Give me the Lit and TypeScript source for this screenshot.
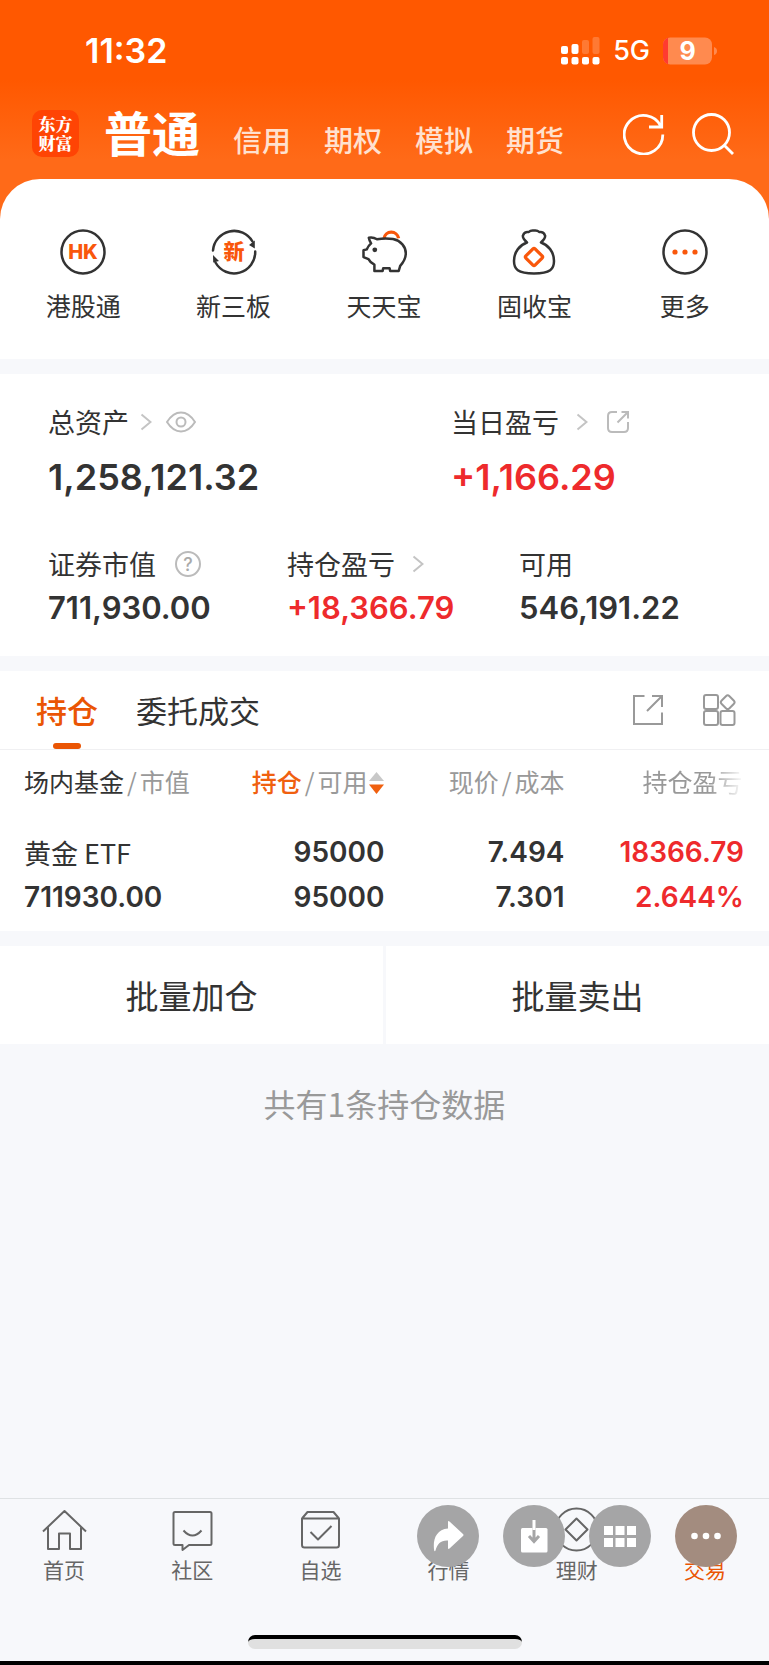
import { LitElement, html, svg, css } from "lit";
import { customElement } from "lit/decorators.js";
import { classMap } from "lit/directives/class-map.js";

const chevron = html`<svg class="chevron" width="12" height="18" viewBox="0 0 12 18" aria-hidden="true"><path d="M1.5 1.5 10.5 9l-9 7.5" /></svg>`;

const shortcuts = [
  {
    label: "港股通",
    icon: svg`<circle cx="24" cy="24" r="21.5"/><text class="hk" x="24" y="31" text-anchor="middle">HK</text>`,
  },
  {
    label: "新三板",
    icon: svg`<path d="M3 22.500A21.200 21.200 0 0 1 42.500 13.500"/><path d="M45.200 23.500A21.200 21.200 0 0 1 5.500 34.500"/><path class="dark" d="M39 17 44.800 12.500 44.800 20.500zM3 27 9 33 3.200 34.500z"/><text class="xin" x="24" y="31" text-anchor="middle">新</text>`,
  },
  {
    label: "天天宝",
    icon: svg`<path class="orange" d="M24 10.500a7.400 7.400 0 0 1 14.600-.2"/><path d="M8.800 9.800c2.800-.6 5.700 0 8.200 1.500 5-1 11-1.200 16-.2 8 1.700 12.800 7.500 12.800 14.200 0 6-3.300 10-5.600 12.500l-1.500 5.200h-8.500l-.6-2.800h-6.400l-.6 2.800h-8.200v-6.300c-2.600-1.200-4.600-3-5.900-5.600l-5-2v-6.800l3.200-.9c1.100-2.600 2.400-4.300 4.400-6-1-1.500-1.900-3.500-2.300-5.600z"/><circle class="dark" cx="14.800" cy="21.800" r="2.400"/>`,
  },
  {
    label: "固收宝",
    icon: svg`<path d="M17 14.500c-2.500-2.300-4.800-4.600-4-7 .7-2.500 3-4 5.500-3.400C20 2.800 22 2.200 24 2.600c2-.4 4 .2 5.500 1.500 2.500-.6 4.800.9 5.500 3.400.8 2.400-1.500 4.700-4 7C38 17 44 23.500 44 33c0 8-3.500 12.500-20 12.500S4 41 4 33c0-9.500 6-16 13-18.500"/><rect class="orange" x="17.500" y="22.500" width="13" height="13" rx="1.500" transform="rotate(45 24 29)"/>`,
  },
  {
    label: "更多",
    icon: svg`<circle cx="24" cy="24" r="21.500"/><circle class="dot" cx="14" cy="24" r="2.600"/><circle class="dot" cx="24" cy="24" r="2.600"/><circle class="dot" cx="34" cy="24" r="2.600"/>`,
  },
];

const navItems = [
  { label: "首页", icon: svg`<path d="M1 22.500 22.500 2 44 22.500M6 18.500V40h11V24.500h11V40h11V18.500"/>` },
  { label: "社区", icon: svg`<path d="M5 3h35q1.500 0 1.500 1.500v30q0 1.500-1.500 1.500H19l-6.500 5V36H5q-1.500 0-1.500-1.500v-30Q3.500 3 5 3zM13.500 21.500q9 10 18 0"/>` },
  { label: "自选", icon: svg`<path d="M4 9.500h37V36q0 2.500-2.500 2.500h-32Q4 38.500 4 36zM4 9.500 9.500 3h26L41 9.500M12.500 23l7.500 7.500L33.500 17"/>` },
  { label: "行情", icon: svg`<path d="M4 36V18h9v18M18 36V6h9v30M32 36V12h9v24"/>` },
  { label: "理财", icon: svg`<circle cx="22.500" cy="20.500" r="21"/><path d="M22.500 9.500 33.500 20.500l-11 11-11-11z"/>` },
  { label: "交易", active: true, icon: svg`<circle cx="22.500" cy="21" r="19"/><path d="M14 17h17M14 25h17"/>` },
];

const tools = [
  { name: "分享", icon: svg`<path d="M31 17q0-1.500 1.500-.5L46 29q1 1 0 2L32.500 43.500q-1.500 1-1.500-.5v-7.500c-7-.5-10.500 3-12.500 10q-.8 1.500-1.300 0C15.500 35 19 24.500 31 23.500z"/>` },
  { name: "保存", icon: svg`<rect x="18" y="23" width="26.500" height="24.500" rx="1.500"/><path class="cut" d="M31 23v12.500M26 31l5 5.500 5-5.500"/><path class="stem" d="M31 15v10"/>` },
  { name: "宫格", icon: svg`<path d="M15 21h9v9h-9zM26.500 21h9v9h-9zM38 21h9v9h-9zM15 33h9v9h-9zM26.500 33h9v9h-9zM38 33h9v9h-9z"/>` },
  { name: "更多操作", warm: true, icon: svg`<circle cx="19.500" cy="31" r="3.300"/><circle cx="31" cy="31" r="3.300"/><circle cx="42.500" cy="31" r="3.300"/>` },
];

@customElement("status-bar")
class StatusBar extends LitElement {
  static styles = css`
    :host { display: flex; align-items: center; justify-content: space-between; padding: 27px 52px 0 85px; height: 48px; color: #fff; font-family: Inter, sans-serif; }
    .time { font-size: 34px; font-weight: 600; line-height: 48px; }
    .right { display: flex; align-items: center; gap: 13px; }
    .net { font-size: 27px; line-height: 48px; font-weight: 500; }
    svg { display: block; fill: #fff; }
    .faint { fill-opacity: 0.2; }
    .level { font: 700 25px Inter, sans-serif; }
  `;
  render() {
    return html`
      <span class="time">11:32</span>
      <span class="right">
        <svg width="39" height="28" viewBox="0 0 39 28" role="img" aria-label="信号">
          <rect x="0" y="9" width="7" height="8" rx="2"/><rect x="10.500" y="7" width="7" height="10" rx="2"/>
          <rect class="faint" x="21" y="3" width="7" height="14" rx="2"/><rect class="faint" x="31.500" y="0" width="7" height="17" rx="2"/>
          <rect x="0" y="20" width="7" height="7.500" rx="2"/><rect x="10.500" y="20" width="7" height="7.500" rx="2"/><rect x="21" y="20" width="7" height="7.500" rx="2"/><rect x="31.500" y="20" width="7" height="7.500" rx="2"/>
        </svg>
        <span class="net">5G</span>
        <svg width="54" height="28" viewBox="0 0 54 28" role="img" aria-label="电量 9">
          <rect x="0" y="0.500" width="49" height="27" rx="7" fill="#ff8a4f"/>
          <path d="M7 .5H5V27.500H7A7 7 0 0 1 0 20.500V7.500A7 7 0 0 1 7 .5z" fill="#ff3b30"/>
          <path d="M51 10v8q3-1 3-4t-3-4z" fill="#ff8a4f"/>
          <text class="level" x="24.500" y="23" text-anchor="middle">9</text>
        </svg>
      </span>`;
  }
}

@customElement("app-header")
class AppHeader extends LitElement {
  static styles = css`
    :host { display: flex; align-items: center; padding: 26px 35px 12px 32px; height: 66px; }
    .logo { width: 47px; box-sizing: border-box; height: 47px; padding-top: 4px; border-radius: 10px; background: #ff4404; color: #fff; text-align: center; font: 900 17px/19px "Noto Serif CJK SC", "Noto Sans CJK SC", sans-serif; margin-bottom: 2px; }
    nav { display: flex; align-items: flex-end; gap: 33px; margin: 0 auto 0 25px; padding-bottom: 6px; font-size: 29px; font-weight: 500; }
    a { color: #ffe1cf; text-decoration: none; line-height: 40px; white-space: nowrap; }
    .current { color: #fff; font-size: 48px; line-height: 56px; font-weight: 700; }
    .actions { display: flex; gap: 27px; }
    button { border: 0; padding: 0; background: none; display: block; }
    svg { display: block; fill: none; stroke: #fff; stroke-width: 2.8; }
  `;
  render() {
    return html`
      <div class="logo">东方<br />财富</div>
      <nav>
        <a class="current" href="#normal">普通</a><a href="#credit">信用</a><a href="#option">期权</a><a href="#sim">模拟</a><a href="#future">期货</a>
      </nav>
      <div class="actions">
        <button aria-label="刷新"><svg width="42" height="42" viewBox="0 0 42 42"><path d="M39.800 21.500A19.300 19.300 0 1 1 38 13.500M38.700 2V14H26"/></svg></button>
        <button aria-label="搜索"><svg width="42" height="42" viewBox="0 0 42 42"><circle cx="19.500" cy="19.500" r="18"/><path d="M32 32l9 9"/></svg></button>
      </div>`;
  }
}

@customElement("shortcut-row")
class ShortcutRow extends LitElement {
  static styles = css`
    :host { display: grid; grid-template-columns: repeat(5, 1fr); padding: 49px 9px 34px 8px; height: 97px; background: #fff; border-radius: 40px 40px 0 0; }
    a { display: flex; flex-direction: column; align-items: center; gap: 10px; color: #333; text-decoration: none; font-size: 25px; line-height: 38px; }
    svg { fill: none; stroke: #333; stroke-width: 2.5; stroke-linejoin: round; stroke-linecap: round; }
    .orange { stroke: #f9570b; stroke-width: 3.2; stroke-linecap: butt; }
    .dark { fill: #333; stroke: none; }
    .dot { fill: #f9570b; stroke: none; }
    text { fill: #f9570b; stroke: none; }
    .hk { font: 800 20px Inter, sans-serif; }
    .xin { font: 900 21px "Noto Sans CJK SC", sans-serif; }
  `;
  render() {
    return shortcuts.map(
      (s) => html`<a href="#"><svg width="48" height="48" viewBox="0 0 48 48" aria-hidden="true">${s.icon}</svg>${s.label}</a>`
    );
  }
}

@customElement("asset-summary")
class AssetSummary extends LitElement {
  static styles = css`
    :host { display: block; background: #fff; padding: 28px 48px 28px; color: #333; }
    dl { display: grid; margin: 0; }
    .main { grid-template-columns: 403fr 270fr; }
    .sub { grid-template-columns: 239fr 232fr 202fr; margin-top: 45px; }
    dt { display: flex; align-items: center; font-size: 27px; line-height: 40px; height: 40px; white-space: nowrap; }
    dd { margin: 0; font-family: Inter, sans-serif; font-weight: 600; }
    .main dd { font-size: 36px; line-height: 44px; margin-top: 13px; }
    .sub dd { font-size: 31px; line-height: 40px; margin-top: 4px; }
    .up { color: #ee2a2c; }
    svg { fill: none; stroke: #bbb; stroke-width: 2; display: block; }
    .chevron { margin-left: 11px; stroke: #c4c4c4; }
    .far { margin-left: 6px; }
    .eye { margin-left: 14px; }
    .icon { margin-left: 18px; }
    .q { font: 500 18px Inter, sans-serif; fill: #aaa; stroke: none; }
  `;
  render() {
    return html`
      <dl class="main">
        <div>
          <dt>总资产${chevron}<svg class="eye" width="30" height="22" viewBox="0 0 30 22"><path d="M1 11Q7 1.500 15 1.500T29 11Q23 20.500 15 20.500T1 11z"/><circle cx="15" cy="11" r="4.500"/></svg></dt>
          <dd>1,258,121.32</dd>
        </div>
        <div>
          <dt>当日盈亏<span class="far">${chevron}</span><svg class="icon" width="24" height="24" viewBox="0 0 24 24"><path d="M11 2H6Q2 2 2 6v12q0 4 4 4h12q4 0 4-4v-6M11.500 12.500 21.500 2.500M15.500 2H22v6.500"/></svg></dt>
          <dd class="up">+1,166.29</dd>
        </div>
      </dl>
      <dl class="sub">
        <div>
          <dt>证券市值<svg class="icon" width="28" height="28" viewBox="0 0 28 28"><circle cx="14" cy="14" r="12"/><text class="q" x="14" y="20.500" text-anchor="middle">?</text></svg></dt>
          <dd>711,930.00</dd>
        </div>
        <div>
          <dt>持仓盈亏<span class="far">${chevron}</span></dt>
          <dd class="up">+18,366.79</dd>
        </div>
        <div>
          <dt>可用</dt>
          <dd>546,191.22</dd>
        </div>
      </dl>`;
  }
}

@customElement("holdings-panel")
class HoldingsPanel extends LitElement {
  static styles = css`
    :host { display: block; background: #fff; color: #333; }
    .bar { display: flex; align-items: center; padding: 0 33px 0 36px; height: 78px; border-bottom: 1px solid #f0f0f2; }
    .tab { position: relative; font: inherit; font-size: 31px; line-height: 78px; color: #333; border: 0; padding: 0; margin-right: 38px; background: none; white-space: nowrap; }
    .on { color: #ea5504; font-weight: 500; }
    .on::after { content: ""; position: absolute; left: 50%; bottom: 0; width: 28px; height: 6px; margin-left: -14px; border-radius: 3px; background: #ea5504; }
    .tools { margin-left: auto; display: flex; gap: 38px; }
    .tools button { border: 0; padding: 0; background: none; }
    svg { display: block; fill: none; stroke: #999; stroke-width: 2; }
    table { width: 100%; border-collapse: collapse; table-layout: fixed; }
    th, td { padding: 0; text-align: right; font-weight: 400; white-space: nowrap; }
    th { font-size: 25px; line-height: 40px; color: #999; padding: 11px 0 29px; }
    tr > :first-child { text-align: left; padding-left: 24px; }
    tr > :last-child { padding-right: 25px; }
    .c1 { width: 27%; }
    .c2 { width: 23%; }
    .c3 { width: 180px; }
    .dark { color: #333; }
    .hot { color: #f0600f; font-weight: 500; }
    .slash { margin: 0 3px; }
    .sort { display: inline-block; stroke: none; margin-left: 2px; vertical-align: -2px; }
    .fade { display: block; overflow: hidden; margin-left: 78px; text-align: left; -webkit-mask-image: linear-gradient(to right, #000 68px, transparent 102px); mask-image: linear-gradient(to right, #000 68px, transparent 102px); }
    td { font: 600 28px/45px Inter, "Noto Sans CJK SC", sans-serif; }
    .name { font-size: 27px; font-weight: 400; font-family: "Noto Sans CJK SC", sans-serif; }
    .up { color: #ee2a2c; }
    tbody tr:last-child td { padding-bottom: 11px; }
  `;
  render() {
    return html`
      <div class="bar">
        <button class="tab on">持仓</button><button class="tab">委托成交</button>
        <div class="tools">
          <button aria-label="分享"><svg width="32" height="32" viewBox="0 0 32 32"><path d="M12.500 2H2v28h28V18.500M15 17 29.500 2.500M20 2h10v11"/></svg></button>
          <button aria-label="布局"><svg width="34" height="34" viewBox="0 0 34 34"><rect x="2" y="2" width="14" height="14" rx="2"/><rect x="2" y="18" width="14" height="14" rx="2"/><rect x="18.500" y="18" width="14" height="14" rx="2"/><rect x="20.200" y="3.700" width="11" height="11" rx="2.500" transform="rotate(45 25.700 9.200)"/></svg></button>
        </div>
      </div>
      <table>
        <colgroup><col class="c1" /><col class="c2" /><col class="c3" /><col /></colgroup>
        <thead>
          <tr>
            <th><span class="dark">场内基金</span><span class="slash">/</span>市值</th>
            <th><span class="hot">持仓</span><span class="slash">/</span>可用<svg class="sort" width="15" height="22" viewBox="0 0 15 22"><path fill="#c8c8c8" d="M7.500 0 15 9H0z"/><path fill="#f0600f" d="M7.500 22 0 12.500h15z"/></svg></th>
            <th>现价<span class="slash">/</span>成本</th>
            <th><span class="fade">持仓盈亏</span></th>
          </tr>
        </thead>
        <tbody>
          <tr><td class="name">黄金 ETF</td><td>95000</td><td>7.494</td><td class="up">18366.79</td></tr>
          <tr><td>711930.00</td><td>95000</td><td>7.301</td><td class="up">2.644%</td></tr>
        </tbody>
      </table>`;
  }
}

@customElement("tab-bar")
class TabBar extends LitElement {
  static styles = css`
    :host { position: relative; display: block; background: #f7f8fb; border-top: 1px solid #dfe2e4; border-bottom: 4px solid #000; }
    nav { display: grid; grid-template-columns: repeat(6, 1fr); padding: 10px 0 50px; }
    .item { display: flex; flex-direction: column; align-items: center; gap: 2px; color: #666; font-size: 21px; line-height: 32px; text-decoration: none; }
    .item svg { fill: none; stroke: currentColor; stroke-width: 2; stroke-linejoin: round; overflow: visible; }
    .active { color: #ea5504; }
    .home { width: 274px; height: 10px; margin: 0 auto 12px; border-radius: 7px; background: #e0e0e0; border-top: 4px solid #000; }
    .tools { position: absolute; top: 6px; right: 32px; display: flex; gap: 24px; }
    .tool { border: 0; padding: 0; width: 62px; height: 62px; border-radius: 50%; background: #a5a5a6; }
    .warm { background: #a38c7f; }
    .tool svg { display: block; fill: #fff; }
    .cut { fill: none; stroke: #a5a5a6; stroke-width: 3; }
    .stem { stroke: #fff; stroke-width: 3; }
  `;
  render() {
    return html`
      <nav>
        ${navItems.map(
          (n) => html`<a href="#" class=${classMap({ item: true, active: !!n.active })}><svg width="45" height="42" viewBox="0 0 45 42" aria-hidden="true">${n.icon}</svg>${n.label}</a>`
        )}
      </nav>
      <div class="home"></div>
      <div class="tools">
        ${tools.map(
          (t) => html`<button aria-label=${t.name} class=${classMap({ tool: true, warm: !!t.warm })}><svg width="62" height="62" viewBox="0 0 62 62">${t.icon}</svg></button>`
        )}
      </div>`;
  }
}

@customElement("app-root")
class AppRoot extends LitElement {
  static styles = css`
    :host { display: flex; flex-direction: column; min-height: 100vh; background: #f7f8fb; font-family: "Noto Sans CJK SC", sans-serif; }
    .top { background: linear-gradient(#ff5800 0, #ff5800 80px, #ff6a18 160px, #ff6a18); }
    main { flex: 1; display: flex; flex-direction: column; gap: 15px; padding-top: 15px; }
    .batch { display: grid; grid-template-columns: 1fr 1fr; gap: 3px; }
    .batch button { font: inherit; font-size: 33px; line-height: 48px; padding: 25px 0; border: 0; background: #fff; color: #333; }
    .count { margin: 22px 0; text-align: center; font-size: 32px; line-height: 44px; color: #999; }
  `;
  render() {
    return html`
      <div class="top">
        <status-bar></status-bar>
        <app-header></app-header>
        <shortcut-row></shortcut-row>
      </div>
      <main>
        <asset-summary></asset-summary>
        <holdings-panel></holdings-panel>
        <div class="batch"><button>批量加仓</button><button>批量卖出</button></div>
        <p class="count">共有1条持仓数据</p>
      </main>
      <tab-bar></tab-bar>`;
  }
}
